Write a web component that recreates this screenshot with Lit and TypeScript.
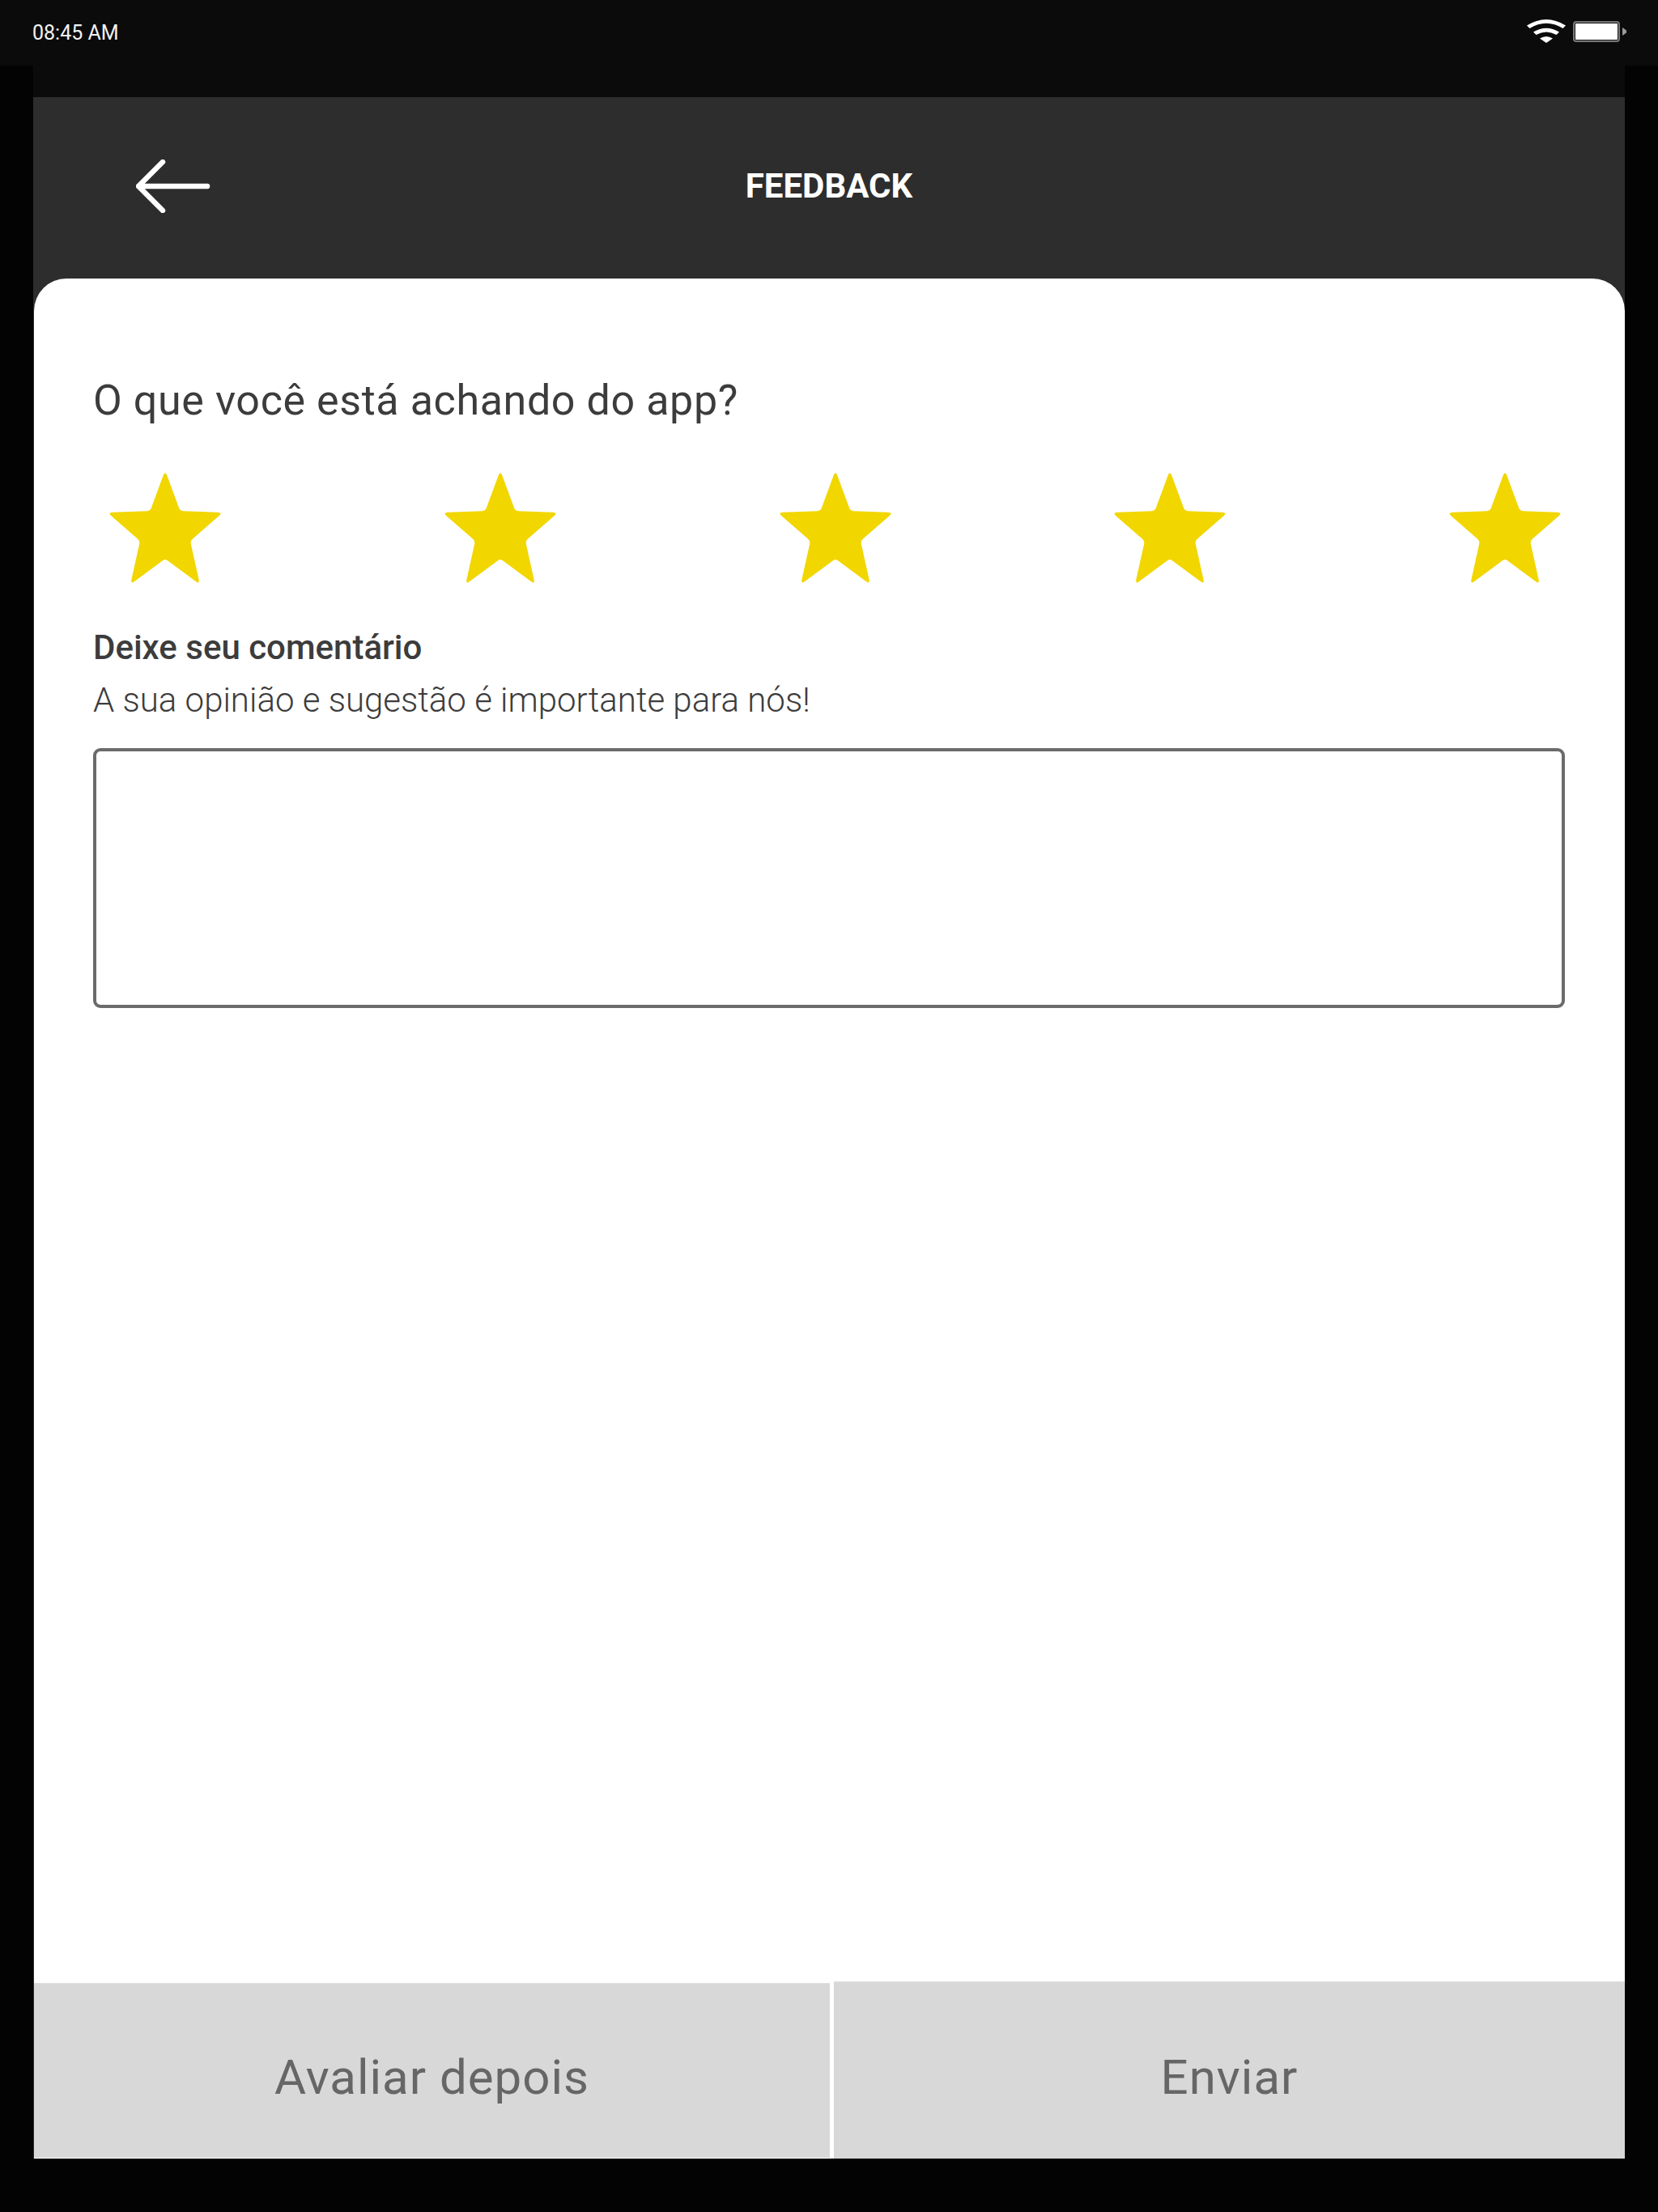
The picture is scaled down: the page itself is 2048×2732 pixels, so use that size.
import { LitElement, html, css, svg } from "lit";
import { customElement } from "lit/decorators.js";

type P = [number, number];

// Star outline, with tips and inner corners softened like the reference.
const STAR: [number, number, number][] = [
  [69, -3, 7], [87.5, 47, 4], [140.5, 49, 7], [100, 84, 4], [112, 138, 7],
  [69, 106, 4], [26, 138, 7], [38, 84, 4], [-2.5, 49, 7], [50.5, 47, 4],
];

function roundedPath(pts: [number, number, number][]): string {
  const n = pts.length;
  const toward = (a: P, b: P, d: number): P => {
    const len = Math.hypot(b[0] - a[0], b[1] - a[1]);
    return [a[0] + ((b[0] - a[0]) * d) / len, a[1] + ((b[1] - a[1]) * d) / len];
  };
  let d = "";
  pts.forEach((p, i) => {
    const v: P = [p[0], p[1]];
    const prev = pts[(i + n - 1) % n];
    const next = pts[(i + 1) % n];
    const s = toward(v, [prev[0], prev[1]], p[2]);
    const e = toward(v, [next[0], next[1]], p[2]);
    d += `${i === 0 ? "M" : "L"}${s[0].toFixed(2)} ${s[1].toFixed(2)}Q${v[0]} ${v[1]} ${e[0].toFixed(2)} ${e[1].toFixed(2)}`;
  });
  return d + "Z";
}

const STAR_D = roundedPath(STAR);

@customElement("app-root")
export class AppRoot extends LitElement {
  static styles = css`
    :host {
      display: flex;
      flex-direction: column;
      width: 2048px;
      height: 2732px;
      background: #030303;
      font-family: Roboto, "Liberation Sans", sans-serif;
    }
    .status {
      height: 81px;
      flex: none;
      background: #0b0b0b;
      display: flex;
      align-items: center;
      justify-content: space-between;
      padding: 0 40px;
      box-sizing: border-box;
      color: #f2f2f2;
      font-size: 25px;
      line-height: 76px;
    }
    .status-icons {
      display: flex;
      align-items: center;
      gap: 9px;
      margin-right: -1px;
      margin-top: -4px;
    }
    .wifi { width: 48px; height: 29px; display: block; }
    .battery {
      display: block;
      width: 66px;
      height: 26px;
    }
    .frame {
      flex: 1;
      min-height: 0;
      display: flex;
      flex-direction: column;
      margin: 0 41px 66px;
    }
    .strip { height: 39px; flex: none; background: #0b0b0b; }
    .sheet {
      flex: 1;
      min-height: 0;
      display: flex;
      flex-direction: column;
      background: #2d2d2d;
    }
    .bar {
      height: 224px;
      flex: none;
      display: grid;
      grid-template-columns: 1fr auto 1fr;
      align-items: center;
      box-sizing: border-box;
    }
    .back { display: block; width: 92px; height: 66px; margin: -5px 0 0 127px; }
    .title {
      color: #fff;
      font-size: 42px;
      font-weight: 700;
      margin-top: -6px;
    }
    .card {
      flex: 1;
      min-height: 0;
      margin-left: 1px;
      background: #fff;
      border-radius: 40px 40px 0 0;
      display: flex;
      flex-direction: column;
    }
    .content {
      flex: 1;
      min-height: 0;
      padding: 121px 74px 0 73px;
      display: flex;
      flex-direction: column;
    }
    h1 {
      margin: 0;
      font-size: 52px;
      line-height: 60px;
      font-weight: 400;
      color: #3c3c3c;
      letter-spacing: 0.6px;
    }
    .stars {
      display: flex;
      justify-content: space-between;
      margin: 59px 5px 0 20px;
    }
    .star { display: block; width: 138px; height: 135px; overflow: visible; }
    .label {
      margin-top: 48px;
      font-size: 42px;
      line-height: 66px;
      font-weight: 500;
      color: #3c3c3c;
    }
    .hint {
      font-size: 42px;
      line-height: 64px;
      font-weight: 300;
      color: #3c3c3c;
    }
    .box {
      margin-top: 27px;
      height: 321px;
      border: 4px solid #6b6b6b;
      border-radius: 9px;
      box-sizing: border-box;
      flex: none;
    }
    .actions {
      display: grid;
      grid-template-columns: 983px 1fr;
      column-gap: 5px;
      align-items: stretch;
      flex: none;
      height: 219px;
    }
    .btn {
      background: #d8d8d8;
      border-top: 1px solid #e2e2e2;
      color: #666;
      font-size: 60px;
      font-weight: 400;
      letter-spacing: 1px;
      display: flex;
      align-items: center;
      justify-content: center;
      box-sizing: border-box;
      padding-top: 16px;
    }
    .btn.later { margin: 2px 0 1px; }
  `;

  render() {
    return html`
      <div class="status">
        <span>08:45 AM</span>
        <div class="status-icons">
          <svg class="wifi" viewBox="0 0 48 29" fill="#fff">
            <path d="M0 7.5Q24 -7.5 48 7.5L44.5 11Q24 -1.5 3.5 11Z" />
            <path d="M8 15.5Q24 6 40 15.5L36.5 19Q24 12 11.5 19Z" />
            <path d="M16 23.5Q24 18.5 32 23.5L24 29Z" />
          </svg>
          <svg class="battery" viewBox="0 0 66 26">
            <rect x="1" y="1" width="56" height="24" rx="3" fill="#1a1a1a" stroke="#777" stroke-width="2" />
            <rect x="3" y="3" width="52" height="20" rx="1" fill="#fff" />
            <path d="M61 8L66 11.5V14.5L61 18Z" fill="#999" />
          </svg>
        </div>
      </div>
      <div class="frame">
        <div class="strip"></div>
        <div class="sheet">
          <div class="bar">
            <svg class="back" viewBox="0 0 92 66" fill="none" stroke="#fff" stroke-width="6.5" stroke-linecap="round" stroke-linejoin="round">
              <path d="M3 33H88M33 3L3 33L33 63" />
            </svg>
            <div class="title">FEEDBACK</div>
            <div></div>
          </div>
          <div class="card">
            <div class="content">
              <h1>O que você está achando do app?</h1>
              <div class="stars">
                ${[0, 1, 2, 3, 4].map(
                  () => html`<svg class="star" viewBox="0 0 138 135">${svg`<path d=${STAR_D} fill="#f2d600" />`}</svg>`
                )}
              </div>
              <div class="label">Deixe seu comentário</div>
              <div class="hint">A sua opinião e sugestão é importante para nós!</div>
              <div class="box"></div>
            </div>
            <div class="actions">
              <div class="btn later">Avaliar depois</div>
              <div class="btn">Enviar</div>
            </div>
          </div>
        </div>
      </div>
    `;
  }
}
